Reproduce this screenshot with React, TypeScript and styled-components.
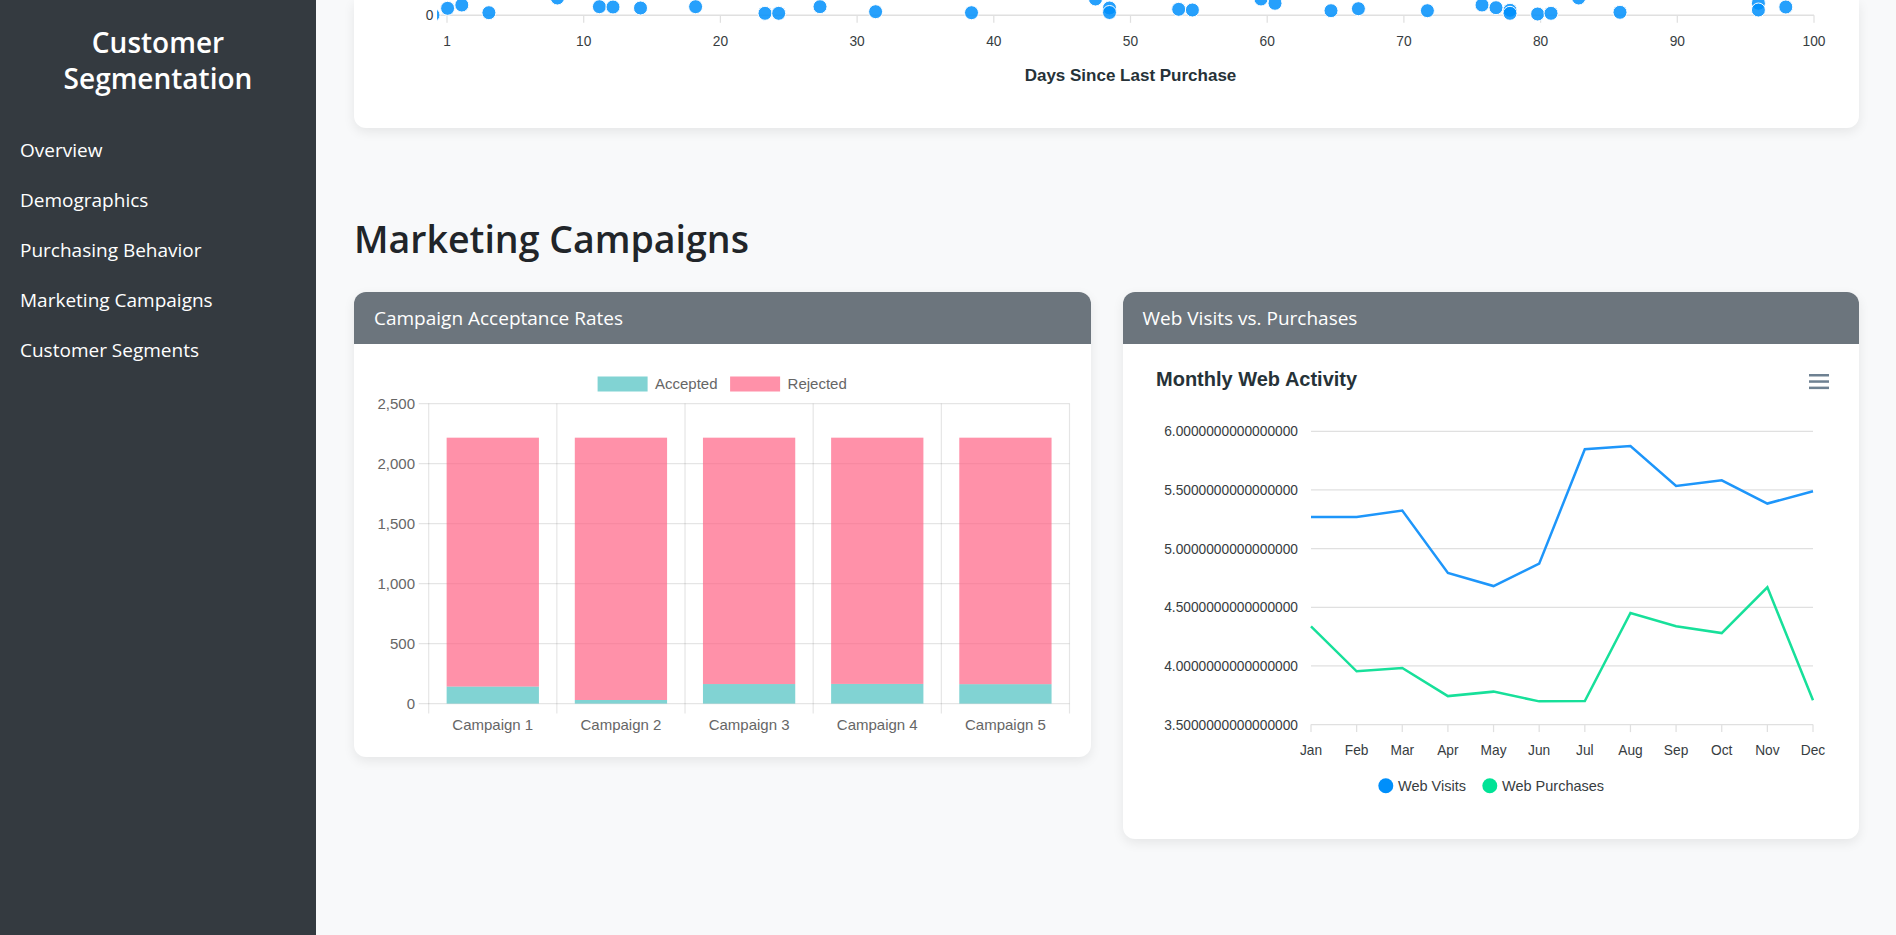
import React from "react";
import styled, { createGlobalStyle } from "styled-components";

const GlobalStyle = createGlobalStyle`
  html, body { margin: 0; padding: 0; background: #f8f9fa; overflow: hidden; }
  body { font-family: "Open Sans", "Noto Sans", sans-serif; color: #212529; }
  *, *::before, *::after { box-sizing: border-box; }
`;

const Shell = styled.div`
  display: grid;
  grid-template-columns: 316px 1fr;
  height: 935px;
`;

const Sidebar = styled.aside`
  background: #343a40;
  color: #fff;
  padding-top: 24px;
`;

const Brand = styled.h4`
  margin: 0 0 29px;
  padding: 0 20px;
  text-align: center;
  font-size: 28px;
  font-weight: 600;
  line-height: 36px;
`;

const NavList = styled.ul`
  list-style: none;
  margin: 0;
  padding: 0;
`;

const NavLink = styled.a`
  display: block;
  padding: 12px 20px;
  font-size: 19px;
  line-height: 26px;
  color: #fff;
  text-decoration: none;
`;

const Main = styled.main`
  padding: 0 37px 0 38px;
  overflow: hidden;
`;

const TailCard = styled.section`
  background: #fff;
  border-radius: 0 0 12px 12px;
  box-shadow: 0 4px 12px rgba(0, 0, 0, 0.08);
  padding: 0 20px 20px;
  height: 128px;
`;

const SectionTitle = styled.h2`
  margin: 87px 0 29px;
  font-size: 37.5px;
  font-weight: 600;
  line-height: 48px;
  color: #212529;
`;

const CardGrid = styled.div`
  display: grid;
  grid-template-columns: 1fr 1fr;
  gap: 32px;
  align-items: start;
`;

const Card = styled.section`
  background: #fff;
  border-radius: 12px;
  box-shadow: 0 4px 12px rgba(0, 0, 0, 0.08);
  overflow: hidden;
`;

const CardHeader = styled.h5`
  margin: 0;
  height: 52px;
  padding: 0 20px;
  display: flex;
  align-items: center;
  background: #6c757d;
  color: #fff;
  font-size: 19px;
  font-weight: 400;
`;

const CardBody = styled.div`
  padding: 20px;
`;

const ChartSvg = styled.svg<{ $h: number }>`
  display: block;
  width: 100%;
  height: ${(p) => p.$h}px;
  font-family: "Liberation Sans", Arial, sans-serif;
`;

/* ---------- Scatter tail ---------- */
const dots: [number, number][] = [
  [73.6, 8.3], [87.8, 5], [114.9, 12.7], [183.4, -2], [225.4, 6.7], [239, 7],
  [266.5, 8], [321.6, 6.7], [391, 13.3], [404.7, 13.3], [446, 6.7], [501.6, 11.7],
  [597.5, 12.7], [721.5, -1], [735.5, 8], [735.5, 12.5], [804.7, 9.3], [818.4, 10],
  [887, -1], [901, 3.3], [957, 10.7], [984.4, 8.7], [1053.4, 10.7], [1108, 5],
  [1122, 7.7], [1136, 10.3], [1136, 13.3], [1163.6, 14], [1177, 13.3], [1204.7, -2],
  [1246, 12.3], [1384.4, 3.3], [1384.4, 10], [1411.8, 7], [59, 15],
];

const ScatterTail = () => {
  const ticks = [1, 10, 20, 30, 40, 50, 60, 70, 80, 90, 100];
  return (
    <ChartSvg $h={108} viewBox="0 0 1465 108">
      <defs>
        <clipPath id="plotClip">
          <rect x={63} y={-20} width={1390} height={50} />
        </clipPath>
      </defs>
      <line x1={64} x2={1440} y1={15.3} y2={15.3} stroke="#e0e0e0" strokeWidth={1.5} />
      {ticks.map((t, i) => {
        const x = 73 + i * 136.7;
        return (
          <g key={t}>
            <line x1={x} x2={x} y1={15.3} y2={22.8} stroke="#e0e0e0" strokeWidth={1.25} />
            <text x={x} y={41} dy="0.36em" textAnchor="middle" fontSize={13.75} fill="#373d3f">
              {t}
            </text>
          </g>
        );
      })}
      <text x={59.3} y={15} dy="0.36em" textAnchor="end" fontSize={13.75} fill="#373d3f">0</text>
      <g clipPath="url(#plotClip)">
        {dots.map(([x, y], i) => (
          <circle key={i} cx={x} cy={y} r={7} fill="#008ffb" fillOpacity={0.85} stroke="#fff" strokeWidth={1} />
        ))}
      </g>
      <text x={756.5} y={75} dy="0.36em" textAnchor="middle" fontSize={17} fontWeight={700} fill="#263238">
        Days Since Last Purchase
      </text>
    </ChartSvg>
  );
};

/* ---------- Stacked bar chart ---------- */
const campaigns = [
  { name: "Campaign 1", acc: 142 },
  { name: "Campaign 2", acc: 30 },
  { name: "Campaign 3", acc: 163 },
  { name: "Campaign 4", acc: 164 },
  { name: "Campaign 5", acc: 162 },
];
const TOTAL = 2216;

const BarChart = () => {
  const left = 54.7;
  const right = 695.5;
  const top = 39.6;
  const bottom = 339.6;
  const cat = (right - left) / 5;
  const y = (v: number) => bottom - v * 0.12;
  const grid = "rgba(0,0,0,0.1)";
  return (
    <ChartSvg $h={373} viewBox="0 0 696.5 373">
      <rect x={223.6} y={12.5} width={50} height={15} fill="rgba(75,192,192,0.7)" />
      <text x={281} y={20} dy="0.36em" fontSize={15} fill="#666">Accepted</text>
      <rect x={356.1} y={12.5} width={50} height={15} fill="rgba(255,99,132,0.7)" />
      <text x={413.6} y={20} dy="0.36em" fontSize={15} fill="#666">Rejected</text>

      {[0, 500, 1000, 1500, 2000, 2500].map((v) => (
        <g key={v}>
          <line x1={left - 10} x2={right} y1={y(v)} y2={y(v)} stroke={grid} strokeWidth={1.2} />
          <text x={41} y={y(v)} dy="0.36em" textAnchor="end" fontSize={15} fill="#666">
            {v.toLocaleString("en-US")}
          </text>
        </g>
      ))}
      {[0, 1, 2, 3, 4, 5].map((i) => (
        <line key={i} x1={left + i * cat} x2={left + i * cat} y1={top} y2={bottom + 10} stroke={grid} strokeWidth={1.2} />
      ))}
      {campaigns.map((c, i) => {
        const cx = left + (i + 0.5) * cat;
        const w = cat * 0.72;
        return (
          <g key={c.name}>
            <rect x={cx - w / 2} y={y(c.acc)} width={w} height={bottom - y(c.acc)} fill="rgba(75,192,192,0.7)" />
            <rect x={cx - w / 2} y={y(TOTAL)} width={w} height={y(c.acc) - y(TOTAL)} fill="rgba(255,99,132,0.7)" />
            <text x={cx} y={361} dy="0.36em" textAnchor="middle" fontSize={15} fill="#666">
              {c.name}
            </text>
          </g>
        );
      })}
    </ChartSvg>
  );
};

/* ---------- Line chart ---------- */
const months = ["Jan", "Feb", "Mar", "Apr", "May", "Jun", "Jul", "Aug", "Sep", "Oct", "Nov", "Dec"];
const visits = [5.269, 5.269, 5.324, 4.792, 4.681, 4.872, 5.847, 5.875, 5.534, 5.582, 5.384, 5.489];
const purchases = [4.338, 3.954, 3.982, 3.743, 3.781, 3.698, 3.701, 4.451, 4.338, 4.28, 4.67, 3.707];

const LineChart = () => {
  const x0 = 168;
  const step = (670 - 168) / 11;
  const yTop = 67.3;
  const perUnit = 117.32;
  const yv = (v: number) => yTop + (6 - v) * perUnit;
  const pts = (arr: number[]) => arr.map((v, i) => `${x0 + i * step},${yv(v)}`).join(" ");
  return (
    <ChartSvg $h={455} viewBox="0 0 696.5 455">
      <text x={13} y={22} fontSize={20} fontWeight={700} fill="#263238">Monthly Web Activity</text>
      <g fill="#6e8192">
        <rect x={666} y={10} width={20} height={2.5} />
        <rect x={666} y={16.3} width={20} height={2.5} />
        <rect x={666} y={22.6} width={20} height={2.5} />
      </g>
      {[6, 5.5, 5, 4.5, 4, 3.5].map((v) => (
        <g key={v}>
          <line x1={x0} x2={670} y1={yv(v)} y2={yv(v)} stroke="#e0e0e0" strokeWidth={1.25} />
          <text x={155} y={yv(v)} dy="0.36em" textAnchor="end" fontSize={13.75} fill="#373d3f">
            {v.toFixed(16)}
          </text>
        </g>
      ))}
      {months.map((m, i) => {
        const x = x0 + i * step;
        return (
          <g key={m}>
            <line x1={x} x2={x} y1={yv(3.5)} y2={yv(3.5) + 7.5} stroke="#e0e0e0" strokeWidth={1.25} />
            <text x={x} y={386.3} dy="0.36em" textAnchor="middle" fontSize={13.75} fill="#373d3f">
              {m}
            </text>
          </g>
        );
      })}
      <polyline points={pts(visits)} fill="none" stroke="#1e96fa" strokeWidth={2.5} strokeLinejoin="miter" />
      <polyline points={pts(purchases)} fill="none" stroke="#17e09a" strokeWidth={2.5} strokeLinejoin="miter" />
      <circle cx={242.8} cy={421.8} r={7.5} fill="#008ffb" />
      <text x={255} y={421.8} dy="0.36em" fontSize={14.5} fill="#373d3f">Web Visits</text>
      <circle cx={346.8} cy={421.8} r={7.5} fill="#00e396" />
      <text x={359} y={421.8} dy="0.36em" fontSize={14.5} fill="#373d3f">Web Purchases</text>
    </ChartSvg>
  );
};

const navItems = ["Overview", "Demographics", "Purchasing Behavior", "Marketing Campaigns", "Customer Segments"];

export default function App() {
  return (
    <>
      <GlobalStyle />
      <Shell>
        <Sidebar>
          <Brand>Customer Segmentation</Brand>
          <NavList>
            {navItems.map((n) => (
              <li key={n}>
                <NavLink href={`#${n.toLowerCase().replace(/ /g, "-")}`}>{n}</NavLink>
              </li>
            ))}
          </NavList>
        </Sidebar>
        <Main>
          <TailCard>
            <ScatterTail />
          </TailCard>
          <SectionTitle>Marketing Campaigns</SectionTitle>
          <CardGrid>
            <Card>
              <CardHeader>Campaign Acceptance Rates</CardHeader>
              <CardBody>
                <BarChart />
              </CardBody>
            </Card>
            <Card>
              <CardHeader>Web Visits vs. Purchases</CardHeader>
              <CardBody>
                <LineChart />
              </CardBody>
            </Card>
          </CardGrid>
        </Main>
      </Shell>
    </>
  );
}
